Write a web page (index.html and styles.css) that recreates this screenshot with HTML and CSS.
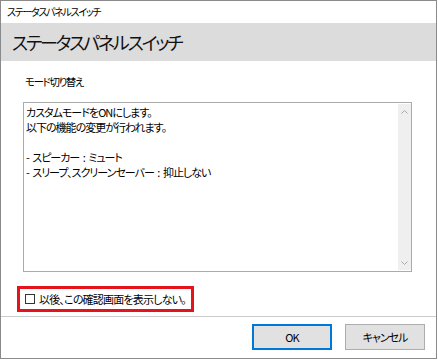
FILE: index.html
```html
<!DOCTYPE html>
<html lang="ja">
<head>
<meta charset="utf-8">
<title>ステータスパネルスイッチ</title>
<link rel="stylesheet" href="styles.css">
</head>
<body>
<div class="window">
  <div class="titlebar">ステータスパネルスイッチ</div>
  <div class="header"><span class="header-text">ステータスパネルスイッチ</span></div>
  <div class="content">
    <div class="label">モード切り替え</div>
    <div class="textbox">
      <div class="textbox-text">
        <div class="line">カスタムモードをONにします。</div>
        <div class="line">以下の機能の変更が行われます。</div>
        <div class="line">&nbsp;</div>
        <div class="line">- スピーカー : ミュート</div>
        <div class="line">- スリープ、スクリーンセーバー : 抑止しない</div>
      </div>
      <div class="scrollbar">
        <svg class="arrow" width="7" height="4" viewBox="0 0 7 4"><path d="M0.5 3.5 L3.5 0.5 L6.5 3.5" fill="none" stroke="#a8a8a8" stroke-width="1"/></svg>
        <svg class="arrow" width="7" height="4" viewBox="0 0 7 4"><path d="M0.5 0.5 L3.5 3.5 L6.5 0.5" fill="none" stroke="#a8a8a8" stroke-width="1"/></svg>
      </div>
    </div>
    <div class="check-row">
      <span class="checkbox"></span>
      <span class="check-label">以後、この確認画面を表示しない。</span>
    </div>
  </div>
  <div class="footer">
    <button class="btn btn-default">OK</button>
    <button class="btn">キャンセル</button>
  </div>
</div>
</body>
</html>
```
FILE: styles.css
```css
* { box-sizing: border-box; }
html, body { margin: 0; padding: 0; background: #ffffff; }
body {
  width: 438px;
  height: 360px;
  font-family: "Noto Sans CJK JP", "Noto Sans", sans-serif;
  font-feature-settings: "palt";
  color: #000;
}
.window {
  width: 437px;
  height: 359px;
  border: 1px solid #8a8a8a;
  display: flex;
  flex-direction: column;
  background: #fff;
}
.titlebar {
  height: 22px;
  padding-left: 6px;
  font-size: 10px;
  line-height: 22px;
  letter-spacing: -1.3px;
  color: #000;
}
.header {
  height: 38px;
  background: #dcdcdc;
  padding-left: 11px;
  display: flex;
  align-items: center;
}
.header-text {
  font-size: 18px;
  line-height: 24px;
  color: #111;
  letter-spacing: -2.2px;
}
.content {
  flex: 1;
  display: flex;
  flex-direction: column;
  align-items: flex-start;
  padding: 13px 24px 0 16px;
}
.label {
  margin-left: 8px;
  font-size: 10.5px;
  line-height: 16px;
  height: 16px;
  letter-spacing: -1.4px;
}
.textbox {
  margin: 12px 0 0 6px;
  width: 389px;
  height: 170px;
  border: 1px solid #ababab;
  display: flex;
  align-self: flex-start;
}
.textbox-text {
  flex: 1;
  padding: 2px 0 0 2px;
  font-size: 11px;
  line-height: 15px;
  letter-spacing: -1px;
  word-spacing: 2px;
}
.line { height: 15px; white-space: nowrap; }
.scrollbar {
  width: 13px;
  margin: 1px 0 1px 0;
  background: #efefef;
  display: flex;
  flex-direction: column;
  align-items: center;
  justify-content: space-between;
  padding: 6px 0 5px;
}
.arrow { display: block; }
.check-row {
  margin-top: 14px;
  height: 26px;
  border: 3px solid #e5131c;
  display: flex;
  align-items: center;
  padding: 0 5px 0 5px;
  gap: 4px;
}
.checkbox {
  width: 10px;
  height: 10px;
  border: 1px solid #333;
  background: #fff;
  flex: none;
}
.check-label {
  font-size: 11px;
  line-height: 16px;
  letter-spacing: -0.8px;
  white-space: nowrap;
}
.footer {
  margin-top: 4px;
  height: 42px;
  border-top: 1px solid #cccccc;
  display: flex;
  justify-content: flex-end;
  align-items: flex-start;
  gap: 13px;
  padding: 7px 11px 0 0;
}
.btn {
  width: 80px;
  height: 26px;
  background: #e1e1e1;
  border: 1px solid #adadad;
  font-family: "Noto Sans CJK JP", "Noto Sans", sans-serif;
  font-feature-settings: "palt";
  font-size: 11px;
  letter-spacing: -1px;
  color: #000;
  padding: 0;
  margin: 0;
}
.btn-default {
  border: 2px solid #0078d7;
}
```
